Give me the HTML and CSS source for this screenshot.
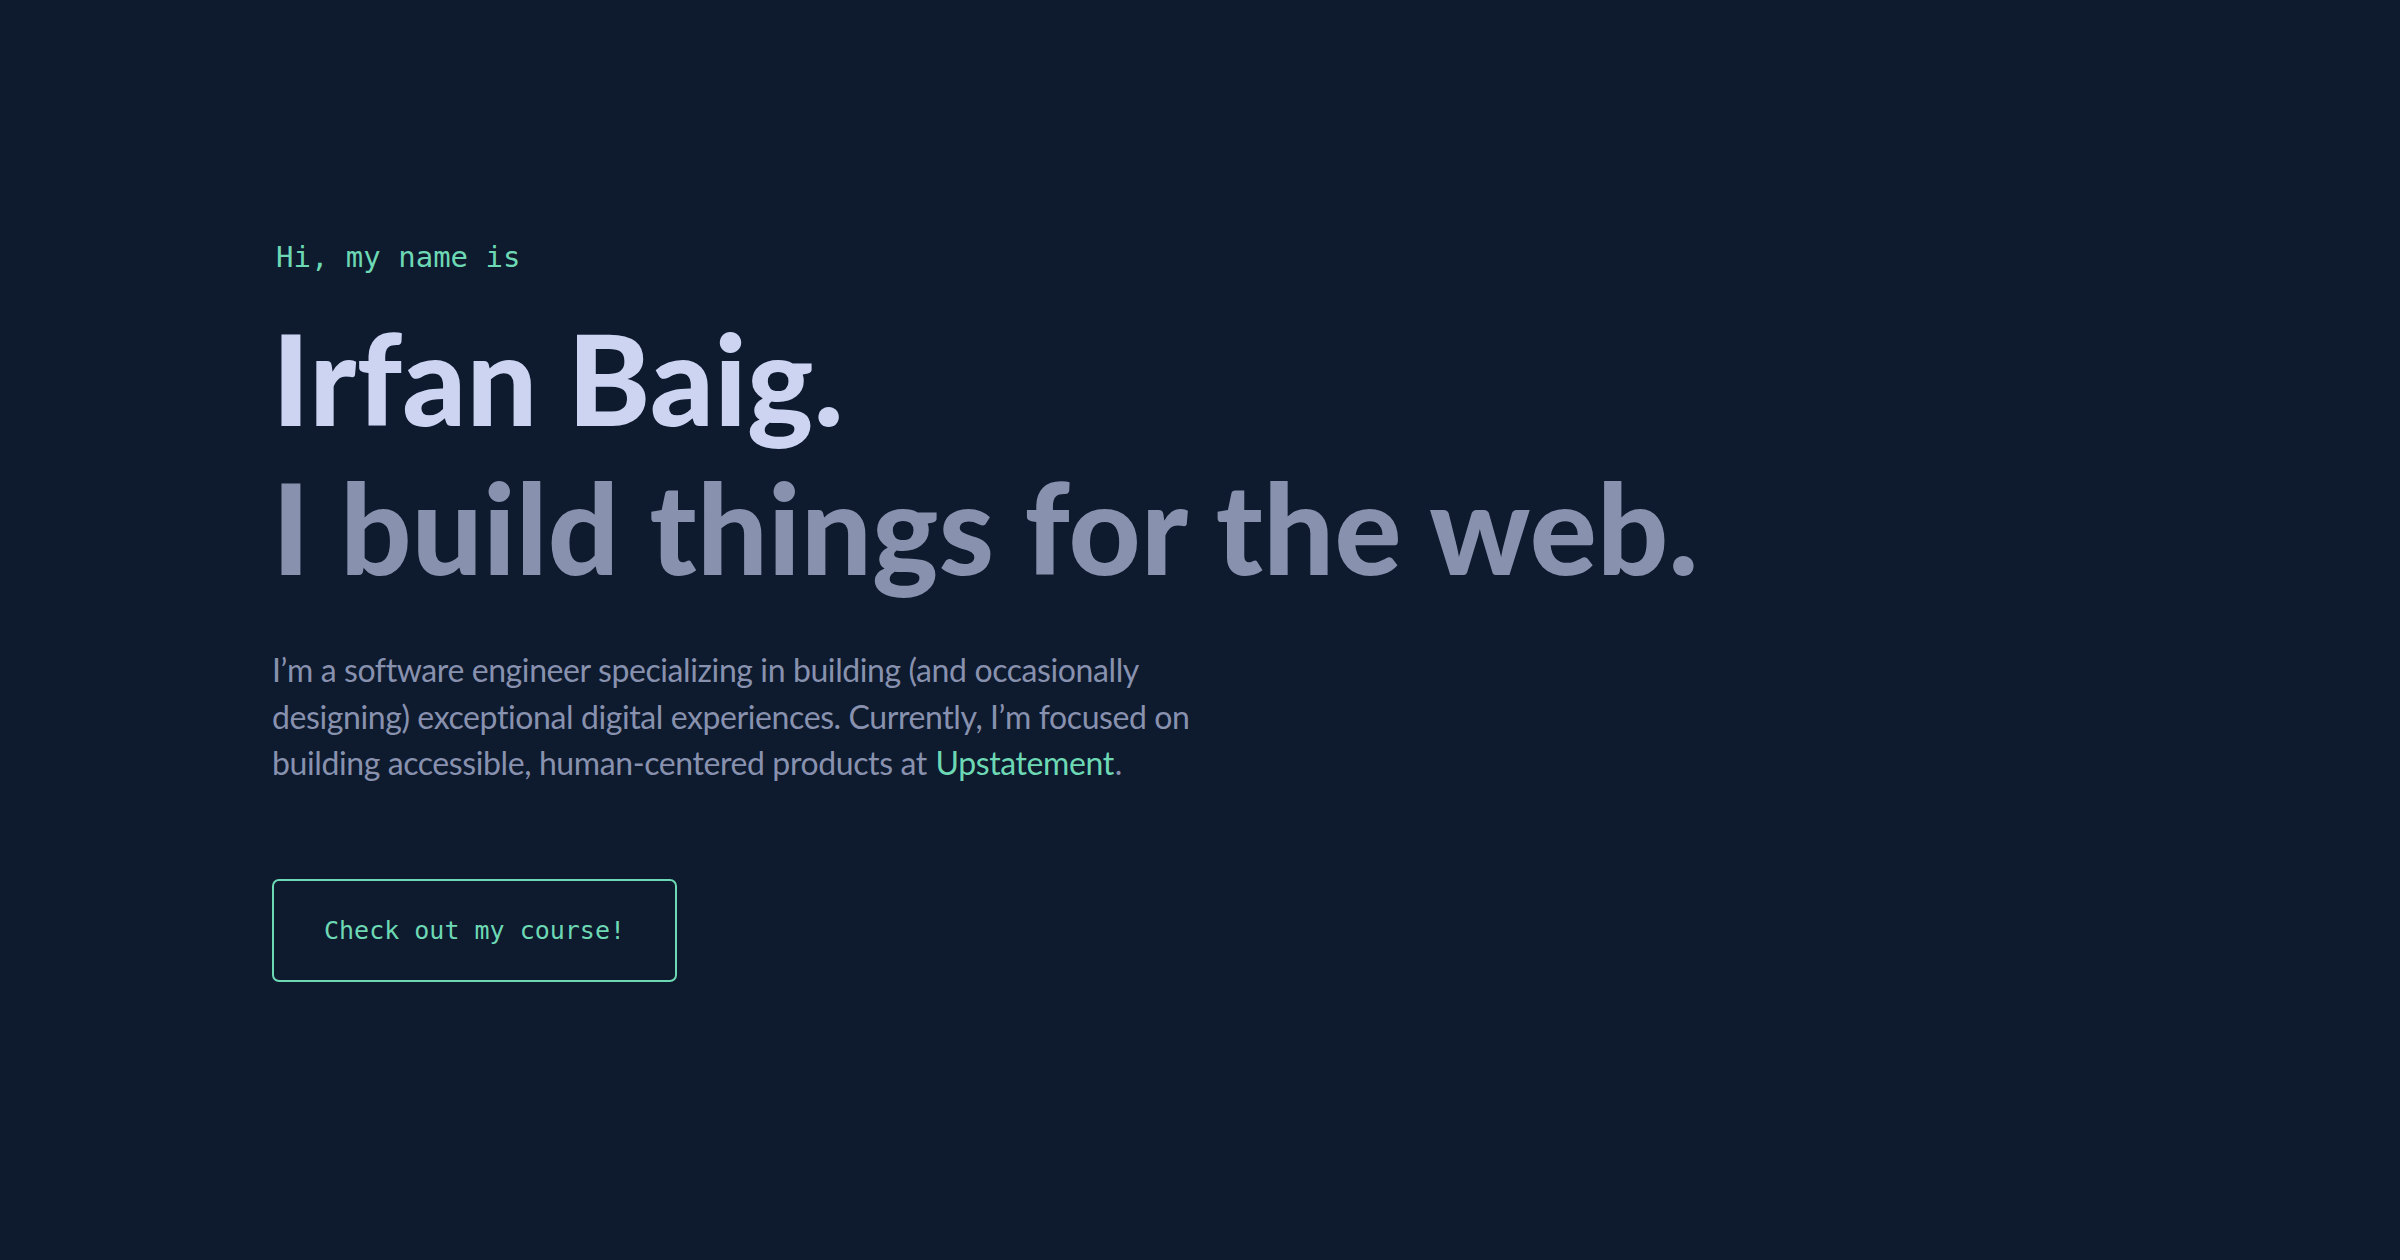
FILE: index.html
```html
<!DOCTYPE html>
<html lang="en">
<head>
<meta charset="utf-8">
<title>Irfan Baig</title>
<link rel="stylesheet" href="styles.css">
</head>
<body>
<main class="page">
  <section class="hero">
    <h1 class="hero-intro">Hi, my name is</h1>
    <h2 class="big-heading name">Irfan Baig.</h2>
    <h3 class="big-heading tagline">I build things for the web.</h3>
    <p class="hero-text">I’m a software engineer specializing in building (and occasionally designing) exceptional digital experiences. Currently, I’m focused on building accessible, human-centered products at <a class="hero-link" href="#">Upstatement</a>.</p>
    <a class="hero-button" href="#">Check out my course!</a>
  </section>
</main>
</body>
</html>
```
FILE: styles.css
```css
html, body {
  margin: 0;
  padding: 0;
  background: #0e1a2e;
}
body {
  min-height: 1260px;
  font-family: "Lato", "Inter", sans-serif;
}
.page {
  padding: 243px 0 0 272px;
}
.hero {
  display: flex;
  flex-direction: column;
  align-items: flex-start;
}
.hero-intro {
  margin: 0 0 44px 4px;
  font-family: "DejaVu Sans Mono", "Liberation Mono", monospace;
  font-weight: 400;
  font-size: 29px;
  line-height: 1;
  color: #6dd8b4;
}
.big-heading {
  margin: 0;
  font-family: "Lato", sans-serif;
  font-weight: 900;
  font-size: 125px;
  line-height: 1;
  letter-spacing: 0.3px;
}
.name {
  color: #ccd4f2;
}
.tagline {
  margin-top: 24px;
  color: #8891ae;
}
.hero-text {
  margin: 57px 0 0 0;
  width: 935px;
  font-family: "Lato", sans-serif;
  font-size: 32px;
  line-height: 46.7px;
  letter-spacing: -0.4px;
  color: #8891ae;
}
.hero-link {
  margin: 0 1px;
  color: #6dd8b4;
  text-decoration: none;
}
.hero-button {
  margin-top: 92px;
  padding: 37px 50px;
  border: 2.5px solid #6dd8b4;
  border-radius: 7px;
  font-family: "DejaVu Sans Mono", "Liberation Mono", monospace;
  font-size: 25px;
  line-height: 25px;
  color: #6dd8b4;
  text-decoration: none;
}
```
